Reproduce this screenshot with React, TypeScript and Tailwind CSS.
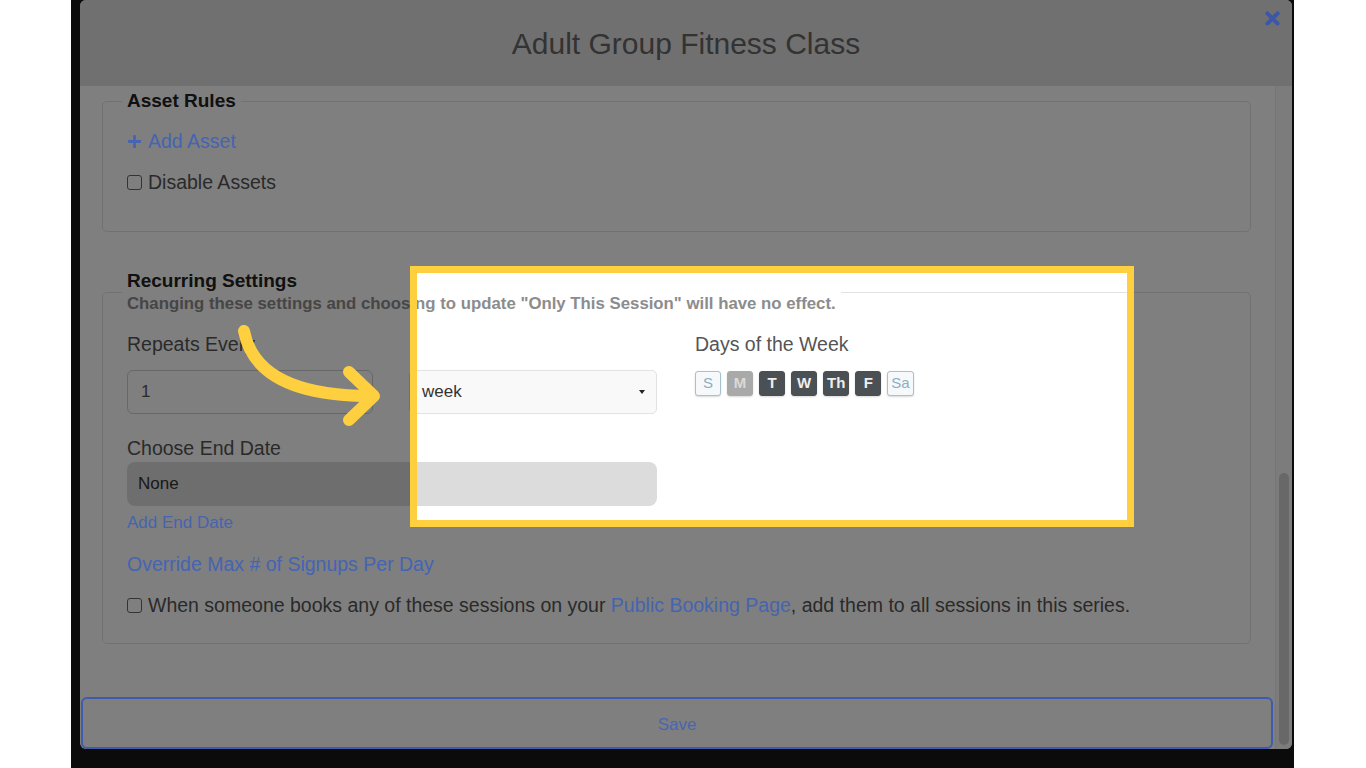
import React from "react";
import { FaTimes, FaPlus } from "react-icons/fa";

/**
 * Day toggle styles, keyed by state
 */
const DAY_STYLES: Record<string, string> = {
  off: "border border-[#a6c1d0] bg-[#f5f9fb] font-normal text-[#8eaebf]",
  muted: "border border-[#a9a9a9] bg-[#a9a9a9] font-bold text-[#dadada]",
  on: "border border-[#4a4f54] bg-[#4b5055] font-bold text-[#eeeeee]"
};

const DAYS = [
  { label: "S", state: "off" },
  { label: "M", state: "muted" },
  { label: "T", state: "on" },
  { label: "W", state: "on" },
  { label: "Th", state: "on" },
  { label: "F", state: "on" },
  { label: "Sa", state: "off" }
];

/**
 * Small square checkbox
 */
const Checkbox: React.FC = () => (
  <span className="inline-block h-[15px] w-[15px] shrink-0 rounded-[3px] border border-[#666] bg-white" />
);

const App: React.FC = () => {
  return (
    <div className="h-[768px] w-full overflow-hidden bg-white font-['Liberation_Sans',Arial,sans-serif]">
      <div className="relative ml-[71px] h-[768px] w-[1223px] overflow-hidden bg-[#161616] pl-[9px]">
        {/* Modal */}
        <div className="flex h-[749px] w-[1212px] flex-col overflow-hidden rounded-[6px] bg-white">
          <header className="relative flex h-[86px] shrink-0 items-center justify-center bg-[#e0e0e0]">
            <h1 className="text-[30px] font-light text-[#666]">Adult Group Fitness Class</h1>
            <button className="absolute right-[9px] top-[8px] z-20 text-[#3b57a5]" aria-label="Close">
              <FaTimes size={21} />
            </button>
          </header>

          <div className="flex min-h-0 flex-1">
            <div className="flex-1 pt-[4px]">
              {/* Asset Rules */}
              <fieldset className="ml-[22px] mr-[24px] rounded-[5px] border border-[#e3e3e3] pb-[36px] pl-[19px]">
                <legend className="px-[5px] text-[19px] font-bold leading-[22px] text-[#222]">Asset Rules</legend>
                <div className="pl-[5px]">
                  <a className="relative z-20 mt-[16px] flex items-center gap-[6px] text-[19.5px] leading-[26px] text-[#4564b2]">
                    <FaPlus size={15} />
                    Add Asset
                  </a>
                  <label className="mt-[15px] flex items-center gap-[6px] text-[19.5px] leading-[26px] text-[#555]">
                    <Checkbox />
                    Disable Assets
                  </label>
                </div>
              </fieldset>

              {/* Recurring Settings */}
              <fieldset className="ml-[22px] mr-[24px] mt-[38px] rounded-[5px] border border-[#e3e3e3] pb-[25px] pl-[19px]">
                <legend className="px-[5px]">
                  <div className="text-[19px] font-bold leading-[22px] text-[#222]">Recurring Settings</div>
                  <div className="mt-[2px] text-[16.8px] font-bold leading-[20px] text-[#8c8c8c]">
                    Changing these settings and choosing to update "Only This Session" will have no effect.
                  </div>
                </legend>
                <div className="pl-[5px]">
                  <div className="flex">
                    <div className="w-[530px]">
                      <div className="mt-[17px] text-[19.5px] leading-[26px] text-[#555]">Repeats Every</div>
                      <div className="mt-[13px] flex">
                        <div className="flex h-[44px] w-[246px] items-center rounded-[6px] border border-[#cfcfcf] bg-white pl-[13px] text-[17px] text-[#555]">
                          1
                        </div>
                        <div className="ml-[36px] flex h-[44px] w-[248px] items-center justify-between rounded-[5px] border border-[#e2e2e2] bg-[#f9f9f9] pl-[12px] pr-[11px] text-[17px] text-[#333]">
                          week
                          <span className="h-0 w-0 border-x-[3.5px] border-t-[4px] border-x-transparent border-t-[#222]" />
                        </div>
                      </div>
                      <div className="mt-[21px] text-[19.5px] leading-[26px] text-[#555]">Choose End Date</div>
                      <div className="mt-[1px] flex h-[44px] items-center rounded-[8px] bg-[#dcdcdc] pl-[11px] text-[17px] text-[#333]">
                        None
                      </div>
                      <a className="relative z-20 mt-[6px] block text-[17px] leading-[22px] text-[#4564b2]">Add End Date</a>
                    </div>

                    <div className="ml-[38px]">
                      <div className="mt-[17px] text-[19.5px] leading-[26px] text-[#555]">Days of the Week</div>
                      <div className="mt-[14px] flex gap-[6px]">
                        {DAYS.map((day) => (
                          <span
                            key={day.label}
                            className={`flex h-[25px] min-w-[26px] items-center justify-center rounded-[3px] px-[3px] text-[15px] shadow-[0_1px_2px_rgba(0,0,0,0.15)] ${DAY_STYLES[day.state]}`}
                          >
                            {day.label}
                          </span>
                        ))}
                      </div>
                    </div>
                  </div>

                  <a className="relative z-20 mt-[17px] block text-[19.5px] leading-[26px] text-[#4564b2]">
                    Override Max # of Signups Per Day
                  </a>
                  <label className="mt-[15px] flex items-center gap-[6px] text-[19.5px] leading-[26px] text-[#555]">
                    <Checkbox />
                    <span>
                      When someone books any of these sessions on your{" "}
                      <a className="relative z-20 text-[#4564b2]">Public Booking Page</a>, add them to all sessions in this
                      series.
                    </span>
                  </label>
                </div>
              </fieldset>

              <button className="relative z-20 ml-[1px] mt-[53px] h-[52px] w-[1192px] rounded-[6px] border-2 border-[#3e5cae] bg-transparent pt-[3px] text-[17px] text-[#4a66b0]">
                Save
              </button>
            </div>

            {/* Scrollbar */}
            <div className="w-[17px] shrink-0 border-l border-[#ececec] bg-[#f9f9f9] pt-[387px]">
              <div className="ml-[3px] h-[272px] w-[10px] rounded-full bg-[#d0d0d0]" />
            </div>
          </div>
        </div>

        {/* Spotlight highlight */}
        <div className="pointer-events-none absolute left-[339px] top-[266px] z-10 h-[261px] w-[724px] border-[7px] border-[#fed03f] shadow-[0_0_0_2000px_rgba(0,0,0,0.5)]" />

        {/* Pointer arrow */}
        <svg
          className="pointer-events-none absolute left-0 top-0 z-30"
          width="1223"
          height="768"
          viewBox="71 0 1223 768"
          fill="none"
        >
          <path
            d="M244 331 C 252 373, 292 396, 371 396"
            stroke="#fed03f"
            strokeWidth="12"
            strokeLinecap="round"
          />
          <path
            d="M349 372 L374 396 L349 420"
            stroke="#fed03f"
            strokeWidth="12"
            strokeLinecap="round"
            strokeLinejoin="round"
          />
        </svg>
      </div>
    </div>
  );
};

export default App;
